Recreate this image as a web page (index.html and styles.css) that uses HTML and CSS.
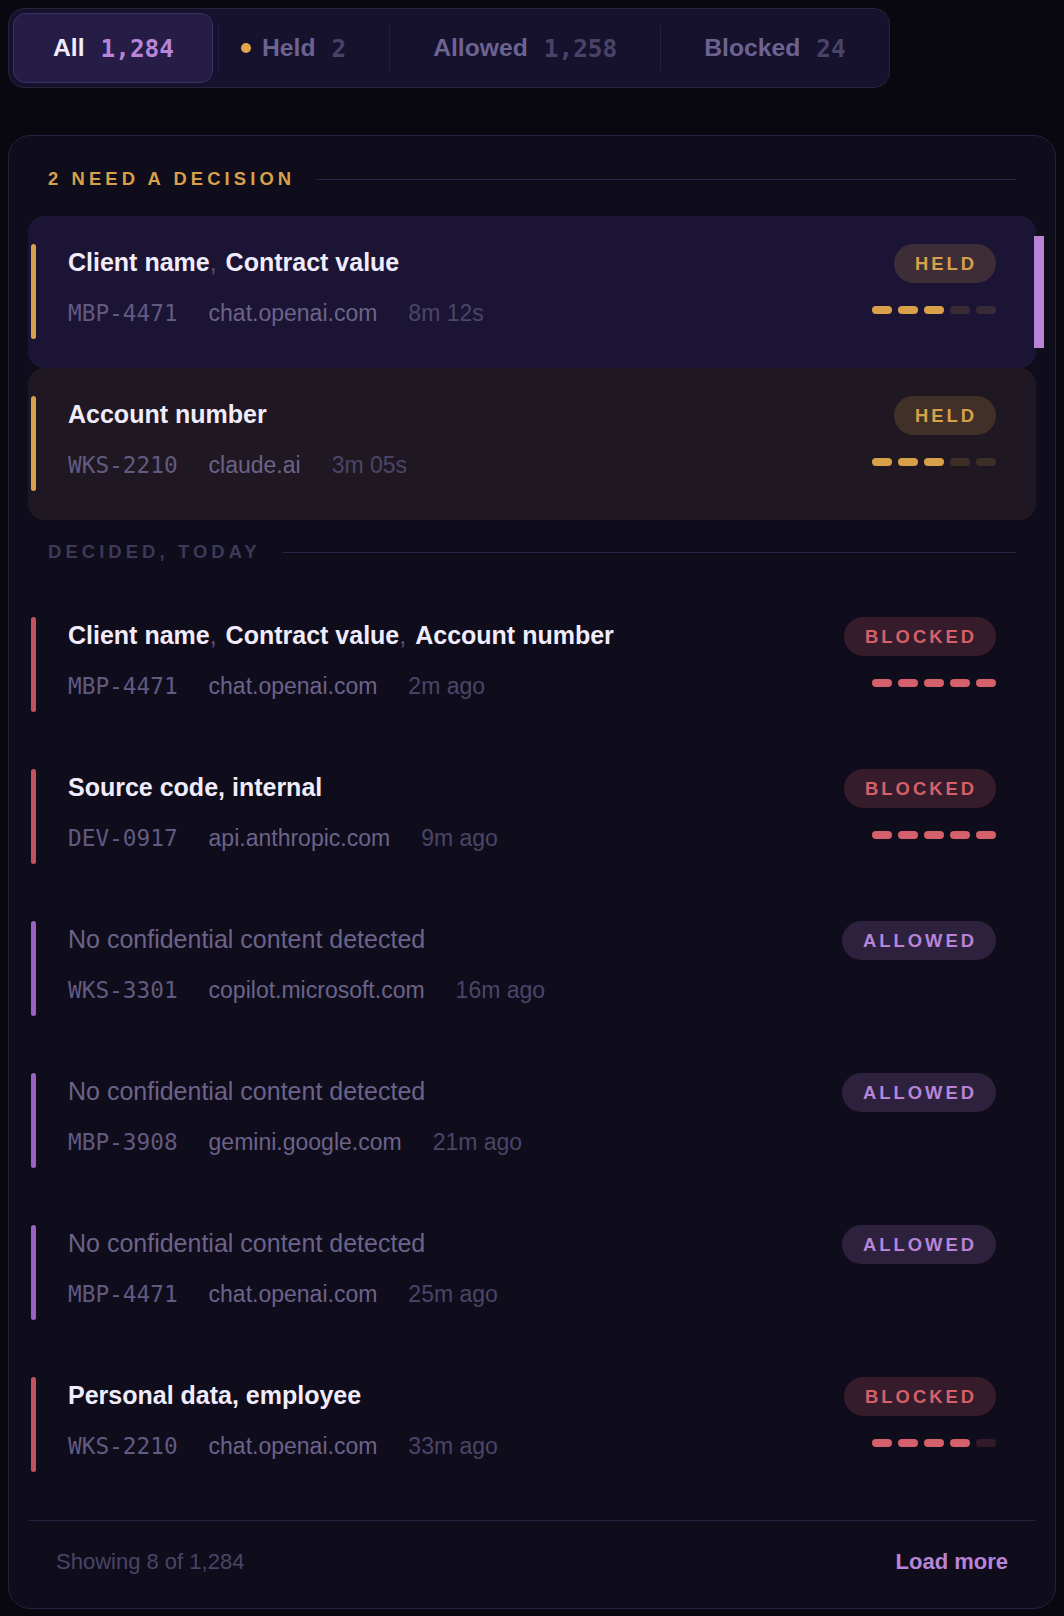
FILE: index.html
```html
<!DOCTYPE html>
<html lang="en">
<head>
<meta charset="utf-8">
<title>Requests</title>
<link rel="stylesheet" href="styles.css">
</head>
<body>
<nav class="tabs">
  <button class="tab tab-active"><span class="tab-label">All</span><span class="tab-count">1,284</span></button>
  <span class="tab-sep"></span>
  <button class="tab"><span class="dot"></span><span class="tab-label">Held</span><span class="tab-count">2</span></button>
  <span class="tab-sep"></span>
  <button class="tab"><span class="tab-label">Allowed</span><span class="tab-count">1,258</span></button>
  <span class="tab-sep"></span>
  <button class="tab"><span class="tab-label">Blocked</span><span class="tab-count">24</span></button>
</nav>

<section class="card">
  <div class="section-head head-pending"><span>2 need a decision</span><span class="rule"></span></div>
  <div class="list">
    <div class="row row-selected">
      <span class="accent accent-held"></span>
      <div class="main">
        <div class="title">Client name<span class="sep">, </span>Contract value</div>
        <div class="meta"><span class="device">MBP-4471</span><span class="host">chat.openai.com</span><span class="time">8m 12s</span></div>
      </div>
      <div class="side">
        <span class="badge badge-held">HELD</span>
        <span class="risk risk-held"><i class="on"></i><i class="on"></i><i class="on"></i><i class="off"></i><i class="off"></i></span>
      </div>
      <span class="mark"></span>
    </div>
    <div class="row row-pending">
      <span class="accent accent-held"></span>
      <div class="main">
        <div class="title">Account number</div>
        <div class="meta"><span class="device">WKS-2210</span><span class="host">claude.ai</span><span class="time">3m 05s</span></div>
      </div>
      <div class="side">
        <span class="badge badge-held">HELD</span>
        <span class="risk risk-held"><i class="on"></i><i class="on"></i><i class="on"></i><i class="off"></i><i class="off"></i></span>
      </div>
    </div>
  </div>

  <div class="section-head head-decided"><span>Decided, today</span><span class="rule"></span></div>
  <div class="list">
    <div class="row">
      <span class="accent accent-blocked"></span>
      <div class="main">
        <div class="title">Client name<span class="sep">, </span>Contract value<span class="sep">, </span>Account number</div>
        <div class="meta"><span class="device">MBP-4471</span><span class="host">chat.openai.com</span><span class="time">2m ago</span></div>
      </div>
      <div class="side">
        <span class="badge badge-blocked">BLOCKED</span>
        <span class="risk risk-blocked"><i class="on"></i><i class="on"></i><i class="on"></i><i class="on"></i><i class="on"></i></span>
      </div>
    </div>
    <div class="row">
      <span class="accent accent-blocked"></span>
      <div class="main">
        <div class="title">Source code, internal</div>
        <div class="meta"><span class="device">DEV-0917</span><span class="host">api.anthropic.com</span><span class="time">9m ago</span></div>
      </div>
      <div class="side">
        <span class="badge badge-blocked">BLOCKED</span>
        <span class="risk risk-blocked"><i class="on"></i><i class="on"></i><i class="on"></i><i class="on"></i><i class="on"></i></span>
      </div>
    </div>
    <div class="row">
      <span class="accent accent-allowed"></span>
      <div class="main">
        <div class="title title-empty">No confidential content detected</div>
        <div class="meta"><span class="device">WKS-3301</span><span class="host">copilot.microsoft.com</span><span class="time">16m ago</span></div>
      </div>
      <div class="side">
        <span class="badge badge-allowed">ALLOWED</span>
      </div>
    </div>
    <div class="row">
      <span class="accent accent-allowed"></span>
      <div class="main">
        <div class="title title-empty">No confidential content detected</div>
        <div class="meta"><span class="device">MBP-3908</span><span class="host">gemini.google.com</span><span class="time">21m ago</span></div>
      </div>
      <div class="side">
        <span class="badge badge-allowed">ALLOWED</span>
      </div>
    </div>
    <div class="row">
      <span class="accent accent-allowed"></span>
      <div class="main">
        <div class="title title-empty">No confidential content detected</div>
        <div class="meta"><span class="device">MBP-4471</span><span class="host">chat.openai.com</span><span class="time">25m ago</span></div>
      </div>
      <div class="side">
        <span class="badge badge-allowed">ALLOWED</span>
      </div>
    </div>
    <div class="row">
      <span class="accent accent-blocked"></span>
      <div class="main">
        <div class="title">Personal data, employee</div>
        <div class="meta"><span class="device">WKS-2210</span><span class="host">chat.openai.com</span><span class="time">33m ago</span></div>
      </div>
      <div class="side">
        <span class="badge badge-blocked">BLOCKED</span>
        <span class="risk risk-blocked"><i class="on"></i><i class="on"></i><i class="on"></i><i class="on"></i><i class="off"></i></span>
      </div>
    </div>
  </div>

  <footer class="footer">
    <span class="count">Showing 8 of 1,284</span>
    <span class="more">Load more</span>
  </footer>
</section>
</body>
</html>
```

FILE: styles.css
```css
* { box-sizing: border-box; }

html, body { background: #09070f; }

body {
  margin: 8px;
  font-family: "Liberation Sans", Arial, Helvetica, sans-serif;
  color: #f1ecfb;
}

/* ---------- tabs ---------- */
.tabs {
  display: flex;
  align-items: center;
  width: fit-content;
  padding: 4px;
  background: #16112d;
  border: 1px solid #28223f;
  border-radius: 16px;
}

.tab {
  position: relative;
  display: flex;
  align-items: center;
  gap: 16px;
  height: 70px;
  padding: 0 42px;
  border: 1px solid transparent;
  border-radius: 12px;
  background: none;
  font-family: inherit;
  font-size: 24.7px;
  font-weight: 700;
  color: #6c6390;
  cursor: pointer;
}

.tab:last-child { padding-right: 38px; }

.tab-active {
  padding: 0 38px 0 39px;
  margin-right: 5px;
  background: #251d45;
  border-color: #392f62;
  color: #f1ecfb;
}

.tab-count {
  font-family: "DejaVu Sans Mono", "Liberation Mono", monospace;
  font-size: 24.4px;
  font-weight: 700;
  color: #4a4368;
}

.tab-active .tab-count { color: #b884d8; }

.tab-sep {
  flex: none;
  width: 1px;
  height: 46px;
  background: #252040;
}

.dot {
  position: absolute;
  left: 21px;
  top: 50%;
  width: 10px;
  height: 10px;
  margin-top: -5px;
  border-radius: 50%;
  background: #e0a64c;
}

/* ---------- card ---------- */
.card {
  margin-top: 47px;
  padding: 31px 19px 0;
  background: #0f0c1c;
  border: 1px solid #27213f;
  border-radius: 22px;
}

.section-head {
  display: flex;
  align-items: center;
  gap: 22px;
  height: 24px;
  padding: 0 20px;
  margin-bottom: 25px;
  font-size: 18.4px;
  font-weight: 700;
  letter-spacing: 4.1px;
  text-transform: uppercase;
  white-space: nowrap;
}

.section-head .rule {
  flex: 1;
  height: 1px;
  background: #2a2446;
}

.head-pending { color: #d9a04a; }

.head-decided {
  margin-top: 20px;
  color: #3f3959;
}

.list {
  display: flex;
  flex-direction: column;
}

/* ---------- rows ---------- */
.row {
  position: relative;
  display: flex;
  padding: 28px 40px 29px 3px;
  border-radius: 16px;
}

.row-selected { background: #1b1434; }
.row-pending { background: #1f1822; }

.accent {
  flex: none;
  width: 5px;
  margin-right: 32px;
  border-radius: 3px;
}

.accent-held { background: #d9a04a; }
.accent-blocked { background: #c4535f; }
.accent-allowed { background: #9a63c1; }

.main {
  flex: 1;
  min-width: 0;
  padding-bottom: 8px;
}

.title {
  font-size: 25px;
  font-weight: 700;
  line-height: 36px;
  color: #f1ecfb;
  white-space: nowrap;
}

.title .sep {
  font-weight: 400;
  color: #5b5479;
  margin-right: 2px;
}

.title-empty {
  font-weight: 400;
  color: #6b6389;
}

.meta {
  display: flex;
  align-items: baseline;
  gap: 31px;
  margin-top: 15px;
  font-size: 23px;
  line-height: 36px;
  white-space: nowrap;
}

.device {
  font-family: "DejaVu Sans Mono", "Liberation Mono", monospace;
  font-size: 22.75px;
  color: #625a81;
}

.host { color: #6b6389; }
.time { color: #4b4568; }

.side {
  display: flex;
  flex-direction: column;
  align-items: flex-end;
  gap: 23px;
}

.badge {
  height: 39px;
  padding: 0 19px 0 21px;
  border-radius: 20px;
  font-size: 18.4px;
  font-weight: 700;
  line-height: 39px;
  letter-spacing: 3px;
}

.badge-held { background: rgba(217, 160, 74, 0.18); color: #d9a04a; }
.badge-blocked { background: rgba(212, 96, 107, 0.2); color: #d4606b; }
.badge-allowed { background: rgba(184, 132, 216, 0.18); color: #b884d8; }

.risk {
  display: flex;
  gap: 6px;
}

.risk i {
  display: block;
  width: 20px;
  height: 8px;
  border-radius: 4px;
}

.risk-held .on { background: #d9a04a; }
.risk-held .off { background: rgba(217, 160, 74, 0.16); }
.risk-blocked .on { background: #d4606b; }
.risk-blocked .off { background: rgba(212, 96, 107, 0.18); }

.mark {
  position: absolute;
  top: 20px;
  right: -8px;
  width: 10px;
  height: 112px;
  background: #b884d8;
}

/* ---------- footer ---------- */
.footer {
  display: flex;
  justify-content: space-between;
  margin-top: 19px;
  padding: 29px 28px 34px;
  border-top: 1px solid #27213f;
  font-size: 22px;
  line-height: 24px;
}

.footer .count { color: #4a4466; }

.footer .more {
  color: #b884d8;
  font-weight: 700;
}
```
